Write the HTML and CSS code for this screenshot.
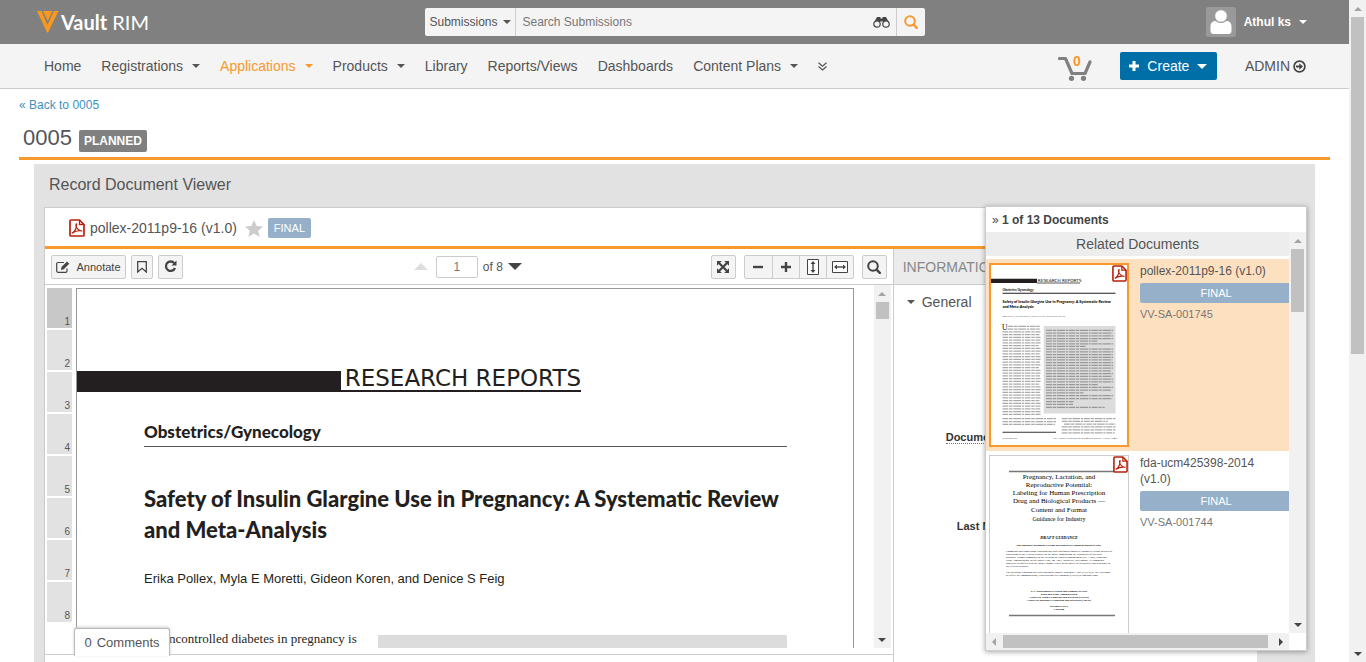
FILE: index.html
```html
<!DOCTYPE html>
<html lang="en">
<head>
<meta charset="utf-8">
<title>Vault RIM - 0005</title>
<link rel="stylesheet" href="styles.css">
</head>
<body>
<svg class="defs" aria-hidden="true">
  <symbol id="pdf" viewBox="0 0 16 18">
    <path d="M2 1h8.500L15 5.500V16a1 1 0 0 1-1 1H2a1 1 0 0 1-1-1V2a1 1 0 0 1 1-1z" fill="#fff" stroke="#b8200c" stroke-width="1.700"/>
    <path d="M10.500 1v4.500H15" fill="none" stroke="#b8200c" stroke-width="1.300"/>
    <path d="M7.300 4.800c-.8 1.700.3 4.200 2 5.700 1 .9 2.200 1.400 3.700 1.500-3-.6-6.500 0-9.700 2 2.500-1.500 4.300-5.300 4.300-9.200z" fill="none" stroke="#b8200c" stroke-width="1.200" stroke-linejoin="round"/>
  </symbol>
  <symbol id="glass" viewBox="0 0 14 14">
    <circle cx="6" cy="6" r="4.800" fill="none" stroke="currentColor" stroke-width="2"/>
    <path d="M9.600 9.600l3.200 3.200" stroke="currentColor" stroke-width="2.400" stroke-linecap="round"/>
  </symbol>
</svg>
<div class="app">
  <div class="main">
    <header class="topbar">
      <div class="logo">
        <svg width="22" height="22" viewBox="0 0 22 22"><path d="M0 0h4.500l6 14L16.800 0H21.500L11 21.500H10z" fill="#f8981d"/><path d="M6 0h9.500l-4.800 10z" fill="#f8981d"/></svg>
        <span class="logo-text"><b>Vault</b> RIM</span>
      </div>
      <form class="search">
        <label class="search-scope"><select aria-label="Search scope"><option>Submissions</option></select><i class="caret"></i></label>
        <input class="search-input" type="text" aria-label="Search" placeholder="Search Submissions">
        <button class="binoculars" type="button" aria-label="Advanced search"><svg width="17" height="11" viewBox="0 0 17 11"><path d="M4 0h3.500v1.500h2V0H13l3 5.500H10V4.500H7v1H1z" fill="#444"/><circle cx="4" cy="7" r="3.200" fill="#f4f4f4" stroke="#444" stroke-width="1.200"/><circle cx="13" cy="7" r="3.200" fill="#f4f4f4" stroke="#444" stroke-width="1.200"/></svg></button>
        <button class="search-go" type="button" aria-label="Search"><svg width="14" height="14"><use href="#glass"/></svg></button>
      </form>
      <button class="user" type="button">
        <svg width="30" height="30" viewBox="0 0 30 30"><rect width="30" height="30" rx="2" fill="#999"/><path d="M4.500 24v-4.500c0-4 2.500-5.500 5-5.500 1.500 1.300 3.500 2 5.500 2s4-.7 5.500-2c2.500 0 5 1.500 5 5.500V24c0 2-1 3-3 3h-15c-2 0-3-1-3-3z" fill="#fff"/><circle cx="15" cy="9" r="6.300" fill="#fff" stroke="#999" stroke-width="1"/></svg>
        <span>Athul ks</span><i class="caret"></i>
      </button>
    </header>
    <nav class="nav">
      <a href="#">Home</a>
      <a href="#">Registrations<i class="caret"></i></a>
      <a href="#" class="active">Applications<i class="caret"></i></a>
      <a href="#">Products<i class="caret"></i></a>
      <a href="#">Library</a>
      <a href="#">Reports/Views</a>
      <a href="#">Dashboards</a>
      <a href="#">Content Plans<i class="caret"></i></a>
      <a href="#" aria-label="More tabs"><svg width="9" height="9" viewBox="0 0 9 9" fill="none" stroke="#555" stroke-width="1.200"><path d="M.5 .8l4 3.500 4-3.500M.5 4.500l4 3.500 4-3.500"/></svg></a>
      <div class="nav-right">
        <a class="cart" href="#"><svg width="34" height="25" viewBox="0 0 34 25"><path d="M1.500 2.500h6L14 17.500h13L32 6" fill="none" stroke="#808080" stroke-width="3.200" stroke-linecap="round" stroke-linejoin="round"/><circle cx="13.500" cy="22.300" r="2.600" fill="#808080"/><circle cx="25.500" cy="22.300" r="2.600" fill="#808080"/></svg><span>0</span></a>
        <button class="create" type="button"><svg width="10" height="10" viewBox="0 0 10 10"><path d="M5 0v10M0 5h10" stroke="#fff" stroke-width="3"/></svg>Create<i class="caret"></i></button>
        <a class="admin" href="#">ADMIN<svg width="13" height="13" viewBox="0 0 13 13"><circle cx="6.500" cy="6.500" r="5.400" fill="none" stroke="#444" stroke-width="1.700"/><path d="M3 5.600h3.300V3.200l3.700 3.300-3.700 3.300V7.400H3z" fill="#444"/></svg></a>
      </div>
    </nav>
    <main class="content">
      <a class="back" href="#"><small>«</small> Back to 0005</a>
      <div class="record"><h1>0005</h1><span class="planned">PLANNED</span></div>
      <section class="panel">
        <h2>Record Document Viewer</h2>
        <div class="viewer">
          <div class="doc-head">
            <svg width="16" height="18"><use href="#pdf"/></svg>
            <span class="doc-name">pollex-2011p9-16 (v1.0)</span>
            <svg width="18" height="17" viewBox="0 0 18 17"><path d="M9 0l2.600 5.900 6.400.6-4.800 4.200L14.600 17 9 13.600 3.400 17l1.400-6.300L0 6.500l6.400-.6z" fill="#ccc"/></svg>
            <span class="final">FINAL</span>
          </div>
          <div class="doc-body">
            <div class="reader">
              <div class="toolbar">
                <div class="tools">
                  <button class="btn annotate" type="button"><svg width="14" height="12" viewBox="0 0 14 12"><path d="M11 7.500V10a1.300 1.300 0 0 1-1.300 1.300H2A1.300 1.300 0 0 1 .7 10V2.800A1.300 1.300 0 0 1 2 1.500h6" fill="none" stroke="#444" stroke-width="1.200"/><path d="M5 9l.5-3L11 .6l2.200 2.200L7.800 8.300z" fill="#444"/></svg>Annotate</button>
                  <button class="btn bookmark" type="button" aria-label="Bookmark"><svg width="10" height="12" viewBox="0 0 10 12"><path d="M.7 .7h8.600v10.300L5 7.300.7 11z" fill="none" stroke="#444" stroke-width="1.300"/></svg></button>
                  <button class="btn square" type="button" aria-label="Refresh"><svg width="13" height="13" viewBox="0 0 13 13"><path d="M10.300 3.200A4.700 4.700 0 1 0 11 8" fill="none" stroke="#444" stroke-width="2.300"/><path d="M12.500 .5v5H7.500z" fill="#444"/></svg></button>
                </div>
                <div class="pager">
                  <button class="plain" type="button" aria-label="Previous page" disabled><svg width="14" height="7"><path d="M0 7l7-7 7 7z" fill="#ddd"/></svg></button>
                  <input type="text" value="1" aria-label="Page">
                  <span>of 8</span>
                  <button class="plain" type="button" aria-label="Next page"><svg width="14" height="7"><path d="M0 0l7 7 7-7z" fill="#444"/></svg></button>
                </div>
                <div class="tools zoom">
                  <button class="btn square" type="button" aria-label="Full screen"><svg width="12" height="12" viewBox="0 0 12 12"><path d="M2 2l8 8M10 2l-8 8" stroke="#444" stroke-width="2.200"/><path d="M0 0h4.800L0 4.800zM12 0v4.800L7.200 0zM0 12V7.200L4.800 12zM12 12H7.200L12 7.200z" fill="#444"/></svg></button>
                  <div class="group">
                    <button type="button" aria-label="Zoom out"><svg width="10" height="10"><path d="M0 5h10" stroke="#444" stroke-width="2.400"/></svg></button>
                    <button type="button" aria-label="Zoom in"><svg width="10" height="10"><path d="M0 5h10M5 0v10" stroke="#444" stroke-width="2.400"/></svg></button>
                    <button type="button" aria-label="Fit height"><svg width="12" height="16" viewBox="0 0 12 16"><path d="M.5 .5h11v15H.5z" fill="#fff" stroke="#444"/><path d="M6 3v10" stroke="#444" stroke-width="1.400"/><path d="M3.500 5L6 2l2.500 3zM3.500 11L6 14l2.500-3z" fill="#444"/></svg></button>
                    <button type="button" aria-label="Fit width"><svg width="16" height="12" viewBox="0 0 16 12"><path d="M.5 .5h15v11H.5z" fill="#fff" stroke="#444"/><path d="M3 6h10" stroke="#444" stroke-width="1.400"/><path d="M5 3.500L2 6l3 2.500zM11 3.500L14 6l-3 2.500z" fill="#444"/></svg></button>
                  </div>
                  <button class="btn square" type="button" aria-label="Find"><svg width="14" height="14"><use href="#glass"/></svg></button>
                </div>
              </div>
              <div class="reader-body">
                <ol class="pages"><li class="current">1</li><li>2</li><li>3</li><li>4</li><li>5</li><li>6</li><li>7</li><li>8</li></ol>
                <article class="paper">
                  <div class="banner"><div class="banner-bar"></div><div class="banner-text">RESEARCH REPORTS</div></div>
                  <div class="paper-text">
                    <p class="topic">Obstetrics/Gynecology</p>
                    <h3>Safety of Insulin Glargine Use in Pregnancy: A Systematic Review and Meta-Analysis</h3>
                    <p class="authors">Erika Pollex, Myla E Moretti, Gideon Koren, and Denice S Feig</p>
                    <div class="columns"><p>ncontrolled diabetes in pregnancy is</p><div class="abstract"></div></div>
                  </div>
                </article>
                <div class="vscroll"><i class="up"></i><b class="reader-thumb"></b><i class="down"></i></div>
              </div>
              <div class="reader-foot"></div>
              <button class="comments" type="button"><span>0</span><span>Comments</span></button>
            </div>
            <aside class="info">
              <h3>INFORMATION</h3>
              <div class="info-body">
                <p class="general"><i class="caret"></i>General</p>
                <p class="field number"><abbr>Document Number</abbr></p>
                <p class="field modified">Last Modified By</p>
              </div>
            </aside>
          </div>
        </div>
        <aside class="related">
          <div class="related-head"><span>»</span> 1 of 13 Documents</div>
          <div class="related-body">
            <div class="related-list">
              <h3>Related Documents</h3>
              <div class="card selected">
                <div class="thumb">
                  <svg viewBox="0 0 544 720">
                    <path d="M0 55h184v17H0z" fill="#231f20"/>
                    <text x="187" y="69" class="t-banner">RESEARCH REPORTS</text>
                    <path d="M184 72h172" stroke="#231f20" stroke-width="3"/>
                    <text x="46" y="104" class="t-topic">Obstetrics/Gynecology</text>
                    <path d="M46 113h452" stroke="#231f20" stroke-width="4"/>
                    <text x="46" y="153" class="t-title">Safety of Insulin Glargine Use in Pregnancy: A Systematic Review</text>
                    <text x="46" y="173" class="t-title">and Meta-Analysis</text>
                    <text x="46" y="207" class="t-small">Erika Pollex, Myla E Moretti, Gideon Koren, and Denice S Feig</text>
                    <path d="M211 244h287v350H211z" fill="#dcdcdc"/>
                    <text x="44" y="259" class="t-drop">U</text>
                    <g fill="none" stroke="#aaa" stroke-width="5" stroke-dasharray="23 3 14 3 31 3 9 3">
                      <path d="M66 245h132M66 256h130M46 267h152M46 278h148M46 289h152M46 300h151M46 311h152M46 322h145M46 333h152M46 344h152M46 355h149M46 366h152M46 377h152M46 388h150M46 399h152M46 410h146M46 421h152M46 432h152M46 443h150M46 454h152M46 465h152M46 476h147M46 487h152M46 498h152M46 509h150M46 520h152M46 531h152M46 542h148M46 553h152M46 564h152M46 575h151M46 586h152M46 597h152M46 614h214M46 626h214M46 637h210"/>
                      <path d="M283 614h215M283 625h185M292 636h206M283 647h215M283 659h215M283 671h212"/>
                    </g>
                    <g fill="none" stroke="#999" stroke-width="5" stroke-dasharray="25 3 13 3 33 3 8 3">
                      <path d="M220 261h268M220 272h265M220 283h268M220 294h268M220 304h205M220 315h268M220 325h158M220 336h268M220 347h268M220 358h267M220 369h268M220 379h265M220 390h268M220 401h268M220 412h268M220 423h262M220 434h268M220 445h264M220 456h268M220 467h268M220 478h210M220 489h268M220 500h262M220 511h150M220 522h268M220 534h264M220 546h110M220 557h108M220 569h235"/>
                    </g>
                    <path d="M46 669h214" stroke="#333" stroke-width="4"/>
                    <text x="46" y="697" class="t-small">theannals.com</text>
                    <text x="250" y="697" class="t-small">The Annals of Pharmacotherapy ■ 2011 January, Volume 45 ■ 9</text>
                  </svg>
                  <svg class="thumb-pdf" width="15" height="17"><use href="#pdf"/></svg>
                </div>
                <div class="card-text"><a href="#">pollex-2011p9-16 (v1.0)</a><span class="final wide">FINAL</span><span class="id">VV-SA-001745</span></div>
              </div>
              <div class="card">
                <div class="thumb">
                  <svg viewBox="0 0 552 736">
                    <path d="M76 62h424M76 638h424" stroke="#777" stroke-width="6"/>
                    <g class="s-head"><text x="276" y="91">Pregnancy, Lactation, and</text><text x="276" y="123">Reproductive Potential:</text><text x="276" y="155">Labeling for Human Prescription</text><text x="276" y="188">Drug and Biological Products —</text><text x="276" y="224">Content and Format</text></g>
                    <text x="276" y="260" class="s-sub">Guidance for Industry</text>
                    <text x="276" y="333" class="s-draft">DRAFT GUIDANCE</text>
                    <text x="276" y="359" class="s-bold">This guidance document is being distributed for comment purposes only.</text>
                    <g class="s-body"><text x="64" y="384">Comments and suggestions regarding this draft document should be submitted within 60 days of</text><text x="64" y="396">publication in the Federal Register of the notice announcing the availability of the draft</text><text x="64" y="408">guidance. Submit comments to the Division of Dockets Management (HFA-305), Food and</text><text x="64" y="420">Drug Administration, 5630 Fishers Lane, rm. 1061, Rockville, MD 20852. All comments</text><text x="64" y="432">should be identified with the docket number listed in the notice of availability that publishes in</text><text x="64" y="445">the Federal Register.</text><text x="64" y="468">For questions regarding this draft document contact Rosemary Addy (CDER) at 301-796-2200</text><text x="64" y="481">or Office of Communication, Outreach and Development (CBER) at 240-402-7800.</text></g>
                    <g class="s-bold"><text x="276" y="543">U.S. Department of Health and Human Services</text><text x="276" y="556">Food and Drug Administration</text><text x="276" y="568">Center for Drug Evaluation and Research (CDER)</text><text x="276" y="580">Center for Biologics Evaluation and Research (CBER)</text><text x="276" y="604">December 2014</text><text x="276" y="617">Labeling</text></g>
                  </svg>
                  <svg class="thumb-pdf" width="15" height="17"><use href="#pdf"/></svg>
                </div>
                <div class="card-text"><a href="#">fda-ucm425398-2014 (v1.0)</a><span class="final wide">FINAL</span><span class="id">VV-SA-001744</span></div>
              </div>
            </div>
            <div class="vscroll"><i class="up"></i><b class="related-thumb"></b><i class="down"></i></div>
            <div class="hscroll"><i class="left"></i><b></b><i class="right"></i></div>
          </div>
        </aside>
      </section>
    </main>
  </div>
  <div class="vscroll"><i class="up"></i><b class="window-thumb"></b><i class="down"></i></div>
</div>
</body>
</html>
```
FILE: styles.css
```css
* { box-sizing: border-box; }
body { margin: 0; font: 14px/18px "Liberation Sans", Arial, sans-serif; color: #555; background: #fff; }
h1, h2, h3, p, ol { margin: 0; padding: 0; font-weight: normal; }
h3 { font-size: 14px; }
a { color: inherit; text-decoration: none; }
button, input, select { font: inherit; color: inherit; border: 0; padding: 0; margin: 0; background: none; outline: 0; }
svg { display: block; flex: none; }
.defs { position: absolute; width: 0; height: 0; }

.app { display: flex; height: 100vh; overflow: hidden; }
.main { flex: 1; min-width: 0; display: flex; flex-direction: column; }
.caret { flex: none; width: 0; height: 0; border: 4px solid transparent; border-top-color: currentColor; border-bottom: 0; }

.topbar { flex: none; height: 44px; background: #808080; display: grid; grid-template-columns: 1fr 500px 1fr; align-items: center; }
.logo { display: flex; align-items: center; padding-left: 37px; gap: 2px; color: #fff; font: 20px/24px Lato, sans-serif; }
.search { display: flex; height: 28px; background: #f4f4f4; border-radius: 2px; overflow: hidden; font-size: 12px; }
.search-scope { width: 91px; display: flex; align-items: center; padding-left: 5px; border-right: 1px solid #ccc; }
.search-scope select { appearance: none; width: 73px; }
.search-input { flex: 1; padding-left: 7px; }
.search-input::placeholder { color: #777; opacity: 1; }
.binoculars { width: 29px; display: grid; place-items: center; }
.search-go { width: 29px; display: grid; place-items: center; border-left: 1px solid #ccc; color: #f8982d; }
.user { justify-self: end; display: flex; align-items: center; gap: 8px; padding-right: 42px; color: #fff; font-size: 12px; font-weight: bold; }

.nav { flex: none; height: 45px; background: #f4f4f4; border-bottom: 1px solid #ccc; display: flex; align-items: center; gap: 20px; padding: 0 43px 0 44px; }
.nav a { display: flex; align-items: center; gap: 9px; }
.nav .active { color: #f8982d; }
.nav-right { margin-left: auto; display: flex; align-items: center; gap: 28px; }
.nav .cart { position: relative; margin-top: 4px; }
.cart span { position: absolute; left: 15px; top: -4px; color: #f8982d; font-weight: bold; }
.create { display: flex; align-items: center; justify-content: center; gap: 8px; width: 97px; height: 28px; border-radius: 2px; background: #006fa8; color: #fff; }
.create .caret { border-width: 5px; border-bottom: 0; }
.nav .admin { gap: 3px; }

.content { flex: 1; min-height: 0; padding: 6px 19px 0; display: flex; flex-direction: column; }
.back { font-size: 12px; line-height: 20px; color: #3f8fc0; }
.back small { font-size: 12px; }
.record { display: flex; align-items: center; gap: 7px; height: 45px; padding: 0 4px 0; border-bottom: 3px solid #f8982d; }
.record h1 { font-size: 22px; line-height: 26px; padding-top: 3px; }
.planned { background: #808080; color: #fff; font-size: 12px; font-weight: bold; line-height: 22px; padding: 0 5px; border-radius: 2px; margin-top: 10px; }
.panel { position: relative; flex: 1; min-height: 0; margin: 4px 15px 0; padding: 0 58px 0 10px; background: #e2e2e2; display: flex; flex-direction: column; }
.panel h2 { flex: none; font-size: 16px; line-height: 20px; padding: 11px 5px 12px; }

.viewer { flex: 1; min-height: 0; background: #fff; border: 1px solid #ccc; border-width: 1px 0 0 1px; display: flex; flex-direction: column; }
.doc-head { flex: none; display: flex; align-items: center; gap: 5px; height: 41px; padding: 2px 24px 0; border-bottom: 3px solid #f8982d; }
.doc-name { margin: 0 3px 0 0; }
.final { background: #95b0c8; color: #fff; font-size: 11px; line-height: 20px; padding: 0 6px; border-radius: 2px; }
.doc-body { flex: 1; min-height: 0; display: flex; }
.reader { position: relative; flex: 7; min-width: 0; display: flex; flex-direction: column; border-right: 1px solid #ccc; }
.toolbar { flex: none; height: 36px; border-bottom: 1px solid #ccc; padding: 0 6px; display: grid; grid-template-columns: 1fr auto 1fr; align-items: center; font-size: 12px; }
.tools { display: flex; gap: 5px; }
.zoom { justify-content: flex-end; gap: 8px; }
.btn, .group { height: 24px; border: 1px solid #ccc; border-radius: 2px; background: #f4f4f4; color: #444; }
.btn { display: flex; align-items: center; justify-content: center; }
.annotate { width: 75px; gap: 6px; font-size: 11px; }
.bookmark { width: 22px; }
.square { width: 25px; }
.group { display: flex; }
.group button { width: 27px; display: grid; place-items: center; }
.group button + button { border-left: 1px solid #ccc; }
.pager { display: flex; align-items: center; gap: 5px; padding-right: 2px; }
.pager input { width: 42px; height: 22px; border: 1px solid #ccc; border-radius: 2px; text-align: center; color: #777; background: #fff; margin-left: 3px; }

.reader-body { flex: 1; min-height: 0; display: flex; padding-right: 2px; }
.pages { list-style: none; flex: none; width: 31px; padding: 3px 4px 0 2px; display: flex; flex-direction: column; gap: 2px; overflow: hidden; }
.pages li { flex: none; height: 40px; background: #e2e2e2; font-size: 10px; line-height: 12px; padding: 28px 2px 0 0; text-align: right; }
.pages .current { background: #c8c8c8; }
.paper { flex: 1; min-width: 0; margin: 3px 20px 0 0; border: 1px solid #999; border-bottom: 0; padding-top: 77px; overflow: hidden; color: #231f20; }
.banner { display: flex; align-items: flex-end; height: 26px; }
.banner-bar { flex: none; width: 34%; height: 21px; background: #231f20; }
.banner-text { font: 23px/24px "DejaVu Sans", sans-serif; padding-left: 4px; border-bottom: 2px solid #231f20; }
.paper-text { padding: 30px 66px 0 67px; }
.topic { font: 900 17px/20px Lato, sans-serif; height: 25px; border-bottom: 1px solid #555; }
.paper h3 { font: 900 22px/31px Lato, sans-serif; padding-top: 36px; }
.authors { padding-top: 25px; font-size: 13px; }
.columns { display: grid; grid-template-columns: 225px 1fr; gap: 9px; padding-top: 39px; font: 13px/20px "Liberation Serif", serif; white-space: nowrap; }
.columns p { padding: 2px 0 0 25px; }
.abstract { height: 13px; margin-top: 8px; background: #dcdcdc; }
.reader-foot { flex: none; height: 14px; }
.reader-foot::before { content: ""; display: block; height: 6px; border-bottom: 1px solid #ccc; }
.comments { position: absolute; left: 29px; bottom: 6px; width: 96px; height: 28px; display: flex; align-items: center; justify-content: center; gap: 5px; font-size: 13px; background: #fff; border: 1px solid #bbb; border-bottom: 0; border-radius: 3px 3px 0 0; box-shadow: 0 -1px 3px #ccc; }

.info { flex: 3; min-width: 0; }
.info h3 { height: 36px; line-height: 36px; padding-left: 9px; background: #ebebeb; border-bottom: 1px solid #ccc; color: #888; }
.info-body { padding: 8px 13px; white-space: nowrap; overflow: hidden; }
.general { display: flex; align-items: center; gap: 7px; }
.field { font-size: 11px; font-weight: bold; color: #333; }
.number { padding: 117px 0 0 39px; }
.number abbr { border-bottom: 1px dotted #777; }
.modified { padding: 71px 0 0 50px; }

.related { position: absolute; top: 42px; right: 8px; bottom: 11px; width: 322px; background: #fff; border: 1px solid #ccc; box-shadow: 0 1px 5px rgba(0, 0, 0, .35); display: flex; flex-direction: column; }
.related-head { flex: none; height: 25px; line-height: 27px; padding-left: 6px; font-size: 12px; font-weight: bold; color: #444; }
.related-head span { font-weight: normal; }
.related-body { flex: 1; min-height: 0; display: grid; grid-template: minmax(0, 1fr) 17px / minmax(0, 1fr) 17px; }
.related-list { overflow: hidden; display: flex; flex-direction: column; }
.related h3 { flex: none; height: 24px; line-height: 24px; margin-bottom: 3px; text-align: center; background: #ededed; }
.card { flex: none; display: flex; height: 192px; padding: 4px 3px; gap: 11px; }
.selected { background: #fde0c0; }
.thumb { position: relative; flex: none; width: 140px; height: 184px; border: 1px solid #ccc; background: #fff; }
.selected .thumb { border: 2px solid #f8982d; }
.thumb-pdf { position: absolute; right: 0; top: 0; }
.card-text { flex: none; width: 152px; display: flex; flex-direction: column; gap: 4px; font-size: 12px; line-height: 16px; }
.card-text a { padding-right: 15px; }
.wide { text-align: center; }
.id { font-size: 11px; line-height: 14px; color: #777; }

.t-banner { font: 17px "DejaVu Sans", sans-serif; }
.t-topic { font: bold 12px Lato, sans-serif; }
.t-title { font: 900 15px Lato, sans-serif; }
.t-small { font: 9px "Liberation Sans", sans-serif; fill: #555; }
.t-drop { font: 30px "Liberation Serif", serif; }
.s-head { font: 28px "Liberation Serif", serif; text-anchor: middle; }
.s-sub { font: 24px "Liberation Serif", serif; text-anchor: middle; }
.s-draft { font: italic bold 17px "Liberation Serif", serif; text-anchor: middle; }
.s-bold { font: bold 11px "Liberation Serif", serif; text-anchor: middle; }
.s-body { font: 11px "Liberation Serif", serif; }

.vscroll { flex: none; width: 17px; background: #f1f1f1; display: flex; flex-direction: column; align-items: center; padding: 7px 0 6px; }
.vscroll b { width: 13px; background: #c1c1c1; margin-top: 6px; }
.vscroll i, .hscroll i { flex: none; width: 0; height: 0; border: 4px solid transparent; }
.vscroll .up { border-bottom-color: #a3a3a3; border-top: 0; }
.vscroll .down { border-top-color: #444; border-bottom: 0; margin-top: auto; }
.window-thumb { height: 52%; }
.reader-thumb { height: 17px; }
.related-thumb { height: 63px; }
.hscroll { background: #f1f1f1; display: flex; align-items: center; padding: 0 6px 0 6px; }
.hscroll b { flex: 1; height: 13px; background: #c1c1c1; margin: 0 11px 0 7px; }
.hscroll .left { border-right-color: #a3a3a3; border-left: 0; }
.hscroll .right { border-left-color: #444; border-right: 0; }
```
